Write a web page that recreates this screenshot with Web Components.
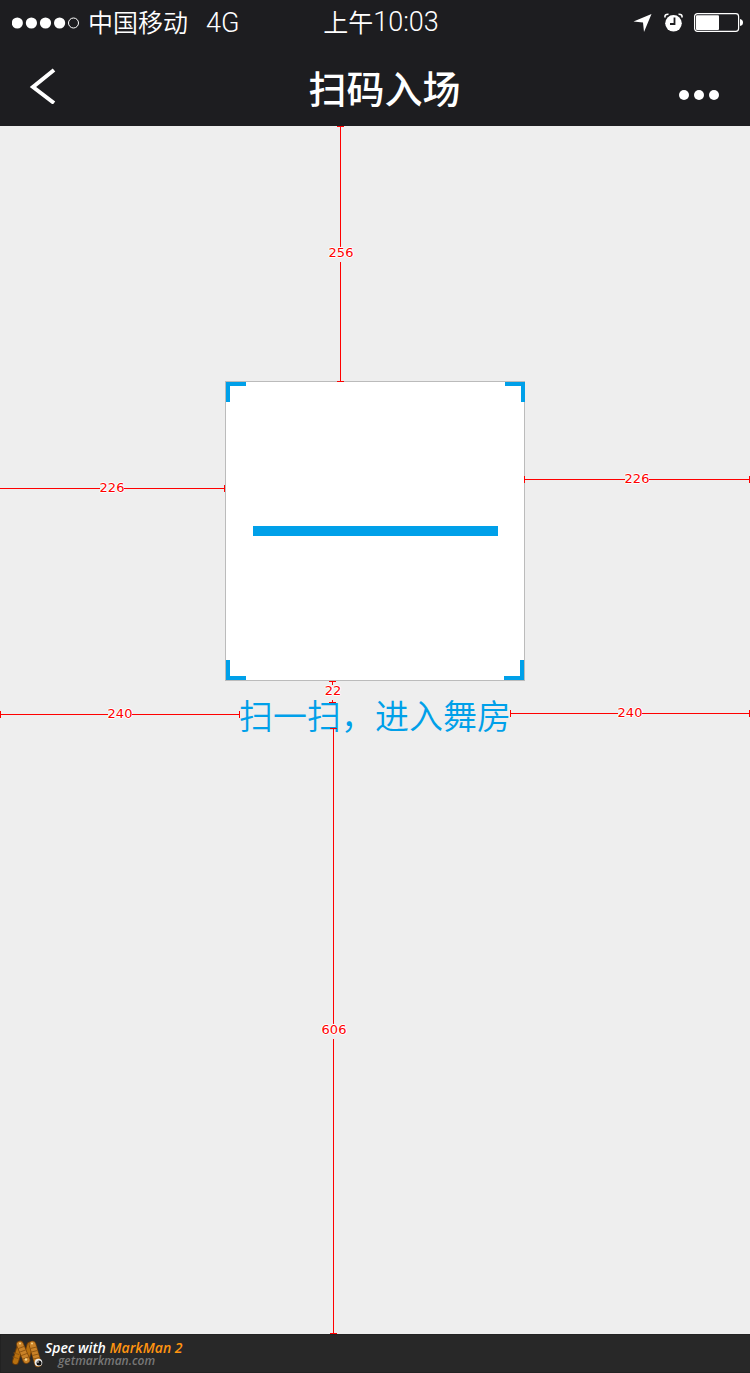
<!DOCTYPE html>
<html lang="zh-CN">
<head>
<meta charset="utf-8">
<meta name="viewport" content="width=device-width, initial-scale=1">
<title>扫码入场</title>
<style>
  body { margin: 0; background: #eee; font-family: "Liberation Sans", "Noto Sans CJK SC", sans-serif; }
</style>
</head>
<body>
<scan-page></scan-page>
<script>
const define = (name, html) => {
  const template = document.createElement('template');
  template.innerHTML = html;
  customElements.define(name, class extends HTMLElement {
    constructor() {
      super();
      this.attachShadow({ mode: 'open' }).append(template.content.cloneNode(true));
    }
  });
};

define('status-bar', `
<style>
  :host { display: grid; grid-template-columns: 1fr auto 1fr; align-items: center; height: 44px; padding-left: 12px;
    color: #fff; font: 350 25px/40px "Noto Sans CJK SC", sans-serif; }
  div { display: flex; align-items: center; }
  .right { justify-content: flex-end; padding-right: 6px; }
  .latin { font: 300 27px/40px Roboto, sans-serif; }
  .network { margin-left: 18px; }
  .dots { margin-right: 8px; }
  .alarm { margin: 0 11px 0 12px; }
  time { display: flex; align-items: center; }
  time, .carrier { padding-bottom: 4px; }
  time .latin { padding-top: 2px; }
  svg { display: block; flex: none; }
</style>
<div>
  <svg class="dots" width="68" height="12" viewBox="0 0 68 12" fill="#fff">
    <circle cx="5.3" cy="6" r="5.6"/><circle cx="19.4" cy="6" r="5.6"/><circle cx="33.5" cy="6" r="5.6"/><circle cx="47.6" cy="6" r="5.6"/>
    <circle cx="61.5" cy="6" r="5" fill="none" stroke="#fff"/>
  </svg>
  <span class="carrier">中国移动</span><span class="latin network">4G</span>
</div>
<time datetime="10:03"><span>上午</span><span class="latin">10:03</span></time>
<div class="right">
  <svg width="19" height="20" viewBox="0 0 19 20"><path d="M18.5 1 L11 19 L10 9.5 L0.5 8.5 Z" fill="#fff"/></svg>
  <svg class="alarm" width="19" height="20" viewBox="0 0 19 20">
    <circle cx="9.5" cy="10.3" r="8.3" fill="#fff"/>
    <path d="M1 4.500 Q0.500 1 4.500 1.200 M18 4.500 Q18.500 1 14.500 1.200" fill="none" stroke="#fff" stroke-width="1.600"/>
    <path d="M10.500 4.500 V11 H6" fill="none" stroke="#1d1d20" stroke-width="1.800"/>
  </svg>
  <svg width="50" height="20" viewBox="0 0 50 20">
    <rect x="0.600" y="0.700" width="44" height="17.600" rx="2.800" fill="none" stroke="#fff" stroke-width="1.200"/>
    <rect x="2" y="2.200" width="23" height="14.800" rx="1" fill="#fff"/>
    <path d="M46 6 Q49 6.500 49 9.500 Q49 12.500 46 13 Z" fill="#fff"/>
  </svg>
</div>`);

define('nav-bar', `
<style>
  :host { display: grid; grid-template-columns: 1fr auto 1fr; align-items: center; height: 82px; padding: 0 10px 0 29px; color: #fff; }
  h1 { margin: 0; padding-top: 4px; font: 500 38px/78px "Noto Sans CJK SC", sans-serif; }
  button { display: block; border: 0; background: none; color: inherit; cursor: pointer; padding: 0; }
  .more { justify-self: end; padding: 20px 21px 0; }
  svg { display: block; }
</style>
<button type="button" aria-label="返回">
  <svg width="30" height="38" viewBox="0 0 30 38"><path d="M25 4 L4 21 L25 37" fill="none" stroke="#fff" stroke-width="4"/></svg>
</button>
<h1><slot></slot></h1>
<button type="button" class="more" aria-label="更多">
  <svg width="40" height="10" viewBox="0 0 40 10" fill="#fff"><circle cx="5" cy="5" r="5"/><circle cx="20" cy="5" r="5"/><circle cx="35" cy="5" r="5"/></svg>
</button>`);

define('measure-line', `
<style>
  :host { display: flex; align-items: center; height: 7px; position: relative; color: #f00; }
  :host([vertical]) { flex-direction: column; width: 7px; height: auto; }
  .cap { flex: none; width: 1px; height: 7px; background: currentColor; }
  .line { flex: 1; height: 1px; background: currentColor; }
  .label { flex: none; padding-bottom: 2px; font: 13px/13px "DejaVu Sans", sans-serif; text-shadow: 0 0 2px #fff, 0 0 2px #fff, 1px 0 #fff, -1px 0 #fff, 0 1px #fff, 0 -1px #fff; }
  :host([vertical]) .cap { width: 7px; height: 1px; }
  :host([vertical]) .line { width: 1px; height: auto; }
  :host([vertical]) .label { padding: 0 0 3px 1px; line-height: 12px; }
  :host([open]) .start { display: none; }
</style>
<span class="cap start"></span><span class="line"></span><span class="label"><slot></slot></span><span class="line"></span><span class="cap"></span>`);

define('scan-frame', `
<style>
  :host { display: grid; grid-template: auto 1fr auto / 1fr 1fr; box-sizing: border-box; width: 300px; height: 300px;
    background: #fff; border: 1px solid #bbb; }
  .corner { box-sizing: border-box; width: 20px; height: 20px; border: 0 solid #00a0e9; }
  .tl { border-width: 4px 0 0 4px; }
  .tr { border-width: 4px 4px 0 0; justify-self: end; margin-right: -1px; }
  .bl { border-width: 0 0 4px 4px; }
  .br { border-width: 0 4px 4px 0; justify-self: end; }
  .bar { grid-column: 1 / 3; align-self: center; height: 10px; margin: 0 26px 0 27px; background: #00a0e9; }
</style>
<span class="corner tl"></span><span class="corner tr"></span>
<span class="bar"></span>
<span class="corner bl"></span><span class="corner br"></span>`);

define('spec-footer', `
<style>
  :host { display: flex; align-items: center; box-sizing: border-box; height: 39px; padding-left: 10px; background: #282828;
    border: 1px solid #222; border-width: 1px 0 1px 1px; font: italic 600 14px/14px "Open Sans", sans-serif; color: #fff; }
  svg { display: block; flex: none; margin-right: 1px; }
  p { margin: 0; }
  b { font-weight: inherit; color: #ff9410; }
  a { display: block; margin-left: 13px; font-size: 12px; line-height: 12px; color: #777; text-decoration: none; }
</style>
<svg width="33" height="30" viewBox="0 0 33 30" fill="none" stroke-linecap="round">
  <g stroke="#6d3c08" stroke-width="7"><path d="M4.500 22.500 L9.500 6"/><path d="M19 6 L15 21"/></g>
  <g stroke="#b8700f" stroke-width="5"><path d="M4.500 22.500 L9.500 6"/><path d="M19 6 L15 21"/></g>
  <g stroke="#7b450a" stroke-width="7.500"><path d="M9 5.500 L15.500 21"/><path d="M21.500 5.500 L27 24.500"/></g>
  <g stroke="#c98228" stroke-width="6"><path d="M9 5.500 L15.500 21"/><path d="M21.500 5.500 L27 24.500"/></g>
  <g stroke="#925711" stroke-width="1">
    <path d="M7.500 9.500 L13 7.500 M9 13 L14.500 11 M10.500 16.500 L16 14.500 M12 20 L17.500 18 M19.500 9.500 L25.500 8 M20.500 13 L26.500 11.500 M21.500 16.500 L27.500 15 M22.500 20 L28.500 18.500 M3 14 L8 15.500 M2 18 L7 19.500"/>
  </g>
  <g fill="#f8d48b"><circle cx="9" cy="4.500" r="1"/><circle cx="21" cy="4.500" r="1"/><circle cx="15" cy="20.500" r="1.200"/></g>
  <circle cx="27.500" cy="23.500" r="3.800" fill="#eee"/><circle cx="28" cy="24" r="2.500" fill="#111"/><circle cx="27" cy="23" r=".8" fill="#fff"/>
</svg>
<p>Spec with <b>MarkMan 2</b><a href="#">getmarkman.com</a></p>`);

define('scan-page', `
<style>
  :host { display: flex; flex-direction: column; min-height: 100vh; background: #eee; }
  header { background: #1d1d20; }
  main { flex: 1; display: flex; flex-direction: column; }
  .above { height: 256px; margin: 0 0 -1px calc(50% - 38px); }
  .row { display: grid; grid-template-columns: 1fr auto 1fr; }
  .frame-left { margin-top: 104px; }
  .frame-right { margin: 95px 0 0 -1px; }
  .between { height: 22px; margin-left: calc(50% - 46px); }
  .caption { height: 25px; }
  .caption-left { margin-top: 8px; }
  .caption-right { margin-top: 7px; }
  p { margin: 0 -1px; font: 350 34px/24px "Noto Sans CJK SC", sans-serif; color: #00a0e9; white-space: nowrap; }
  .below { flex: 1; min-height: 200px; margin-left: calc(50% - 45px); }
</style>
<header>
  <status-bar></status-bar>
  <nav-bar>扫码入场</nav-bar>
</header>
<main>
  <measure-line vertical class="above">256</measure-line>
  <div class="row">
    <measure-line open class="frame-left">226</measure-line>
    <scan-frame></scan-frame>
    <measure-line class="frame-right">226</measure-line>
  </div>
  <measure-line vertical class="between">22</measure-line>
  <div class="row caption">
    <measure-line class="caption-left">240</measure-line>
    <p>扫一扫，进入舞房</p>
    <measure-line class="caption-right">240</measure-line>
  </div>
  <measure-line vertical class="below">606</measure-line>
</main>
<spec-footer></spec-footer>`);
</script>
</body>
</html>
